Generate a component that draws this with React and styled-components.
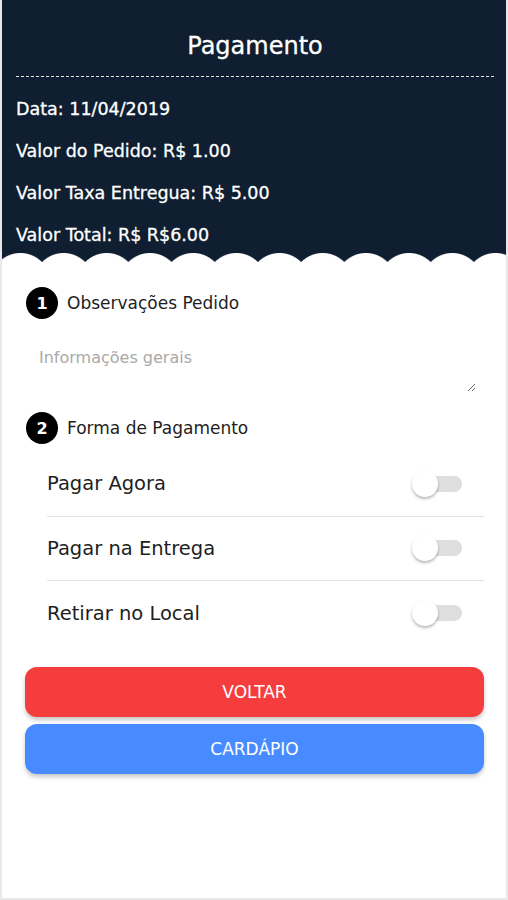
import React, { useState } from 'react';
import styled, { createGlobalStyle } from 'styled-components';

const NAVY = '#0f1f31';

const GlobalStyle = createGlobalStyle`
  html, body {
    margin: 0;
    padding: 0;
    background: #fff;
  }
  body {
    font-family: "DejaVu Sans", "Liberation Sans", sans-serif;
  }
  * {
    box-sizing: border-box;
  }
`;

const Page = styled.div`
  width: 508px;
  min-height: 900px;
  background: #fff;
  border: 2px solid #e8e8e8;
  border-top: none;
  display: flex;
  flex-direction: column;
`;

const Header = styled.header`
  background: ${NAVY};
  color: #fff;
  padding: 31px 12px 0 14px;
  -webkit-text-stroke: 0.3px #fff;
`;

const Title = styled.h1`
  margin: 0;
  text-align: center;
  font-size: 24px;
  font-weight: normal;
  line-height: 30px;
`;

const Dashed = styled.hr`
  margin: 15px 0 11px 0;
  border: none;
  border-top: 1px dashed rgba(255, 255, 255, 0.9);
`;

const InfoLine = styled.div`
  font-size: 17.5px;
  line-height: 42px;
`;

const Scallop = styled.div`
  height: 10px;
  margin-top: -4px;
  background-color: ${NAVY};
  background-image: radial-gradient(circle at 50% 31px, #fff 29.5px, ${NAVY} 30.5px);
  background-size: 43.2px 10px;
  background-repeat: repeat-x;
  background-position: -3.2px 0;
`;

const Body = styled.main`
  padding: 25px 22px 0 24px;
  display: flex;
  flex-direction: column;
`;

const SectionHead = styled.div`
  display: flex;
  align-items: center;
  gap: 9px;
  height: 32px;
  margin-top: ${p => p.$top || 0}px;
  font-size: 17px;
  color: #1e1e1e;
`;

const Badge = styled.span`
  width: 32px;
  height: 32px;
  border-radius: 50%;
  background: #000;
  color: #fff;
  font-size: 16px;
  font-weight: bold;
  display: flex;
  align-items: center;
  justify-content: center;
`;

const Notes = styled.textarea`
  margin-top: 21px;
  width: 450px;
  height: 52px;
  border: none;
  outline: none;
  padding: 8px 13px;
  font-family: inherit;
  font-size: 16px;
  line-height: 20px;
  color: #222;
  background: transparent;
  &::placeholder {
    color: #a9a9a9;
  }
`;

const OptionList = styled.div`
  margin: 8px 0 0 21px;
  display: flex;
  flex-direction: column;
`;

const OptionRow = styled.label`
  height: 64.5px;
  display: flex;
  align-items: center;
  justify-content: space-between;
  padding-right: 22px;
  font-size: 19.5px;
  color: #1e1e1e;
  border-bottom: ${p => (p.$last ? 'none' : '1px solid #e4e4e4')};
  cursor: pointer;
`;

const Toggle = styled.span`
  position: relative;
  width: 50px;
  height: 26px;
  display: inline-block;
`;

const Track = styled.span`
  position: absolute;
  right: 0;
  top: 5px;
  width: 42px;
  height: 16px;
  border-radius: 8px;
  background: ${p => (p.$on ? '#a9c8ff' : '#dedede')};
`;

const Knob = styled.span`
  position: absolute;
  top: 0;
  left: ${p => (p.$on ? '24px' : '0')};
  width: 26px;
  height: 26px;
  border-radius: 50%;
  background: ${p => (p.$on ? '#488aff' : '#fff')};
  box-shadow: 0 2px 3px rgba(0, 0, 0, 0.28);
`;

const Actions = styled.div`
  margin: 21px 0 0 -1px;
  display: flex;
  flex-direction: column;
  gap: 7px;
`;

const Button = styled.button`
  height: 50px;
  width: 100%;
  border: none;
  border-radius: 12px;
  background: ${p => p.$color};
  color: #fff;
  font-family: inherit;
  font-size: 17px;
  text-transform: uppercase;
  box-shadow: 0 3px 4px rgba(0, 0, 0, 0.22);
  cursor: pointer;
`;

const OPTIONS = ['Pagar Agora', 'Pagar na Entrega', 'Retirar no Local'];

const App = () => {
  const [selected, setSelected] = useState(null);

  return (
    <Page>
      <GlobalStyle />
      <Header>
        <Title>Pagamento</Title>
        <Dashed />
        <InfoLine>Data: 11/04/2019</InfoLine>
        <InfoLine>Valor do Pedido: R$ 1.00</InfoLine>
        <InfoLine>Valor Taxa Entregua: R$ 5.00</InfoLine>
        <InfoLine>Valor Total: R$ R$6.00</InfoLine>
      </Header>
      <Scallop />
      <Body>
        <SectionHead>
          <Badge>1</Badge>
          Observações Pedido
        </SectionHead>
        <Notes placeholder="Informações gerais" />
        <SectionHead $top={20}>
          <Badge>2</Badge>
          Forma de Pagamento
        </SectionHead>
        <OptionList>
          {OPTIONS.map((label, i) => (
            <OptionRow key={label} $last={i === OPTIONS.length - 1} onClick={() => setSelected(selected === i ? null : i)}>
              {label}
              <Toggle>
                <Track $on={selected === i} />
                <Knob $on={selected === i} />
              </Toggle>
            </OptionRow>
          ))}
        </OptionList>
        <Actions>
          <Button $color="#f53d3d">Voltar</Button>
          <Button $color="#488aff">Cardápio</Button>
        </Actions>
      </Body>
    </Page>
  );
};

export default App;
